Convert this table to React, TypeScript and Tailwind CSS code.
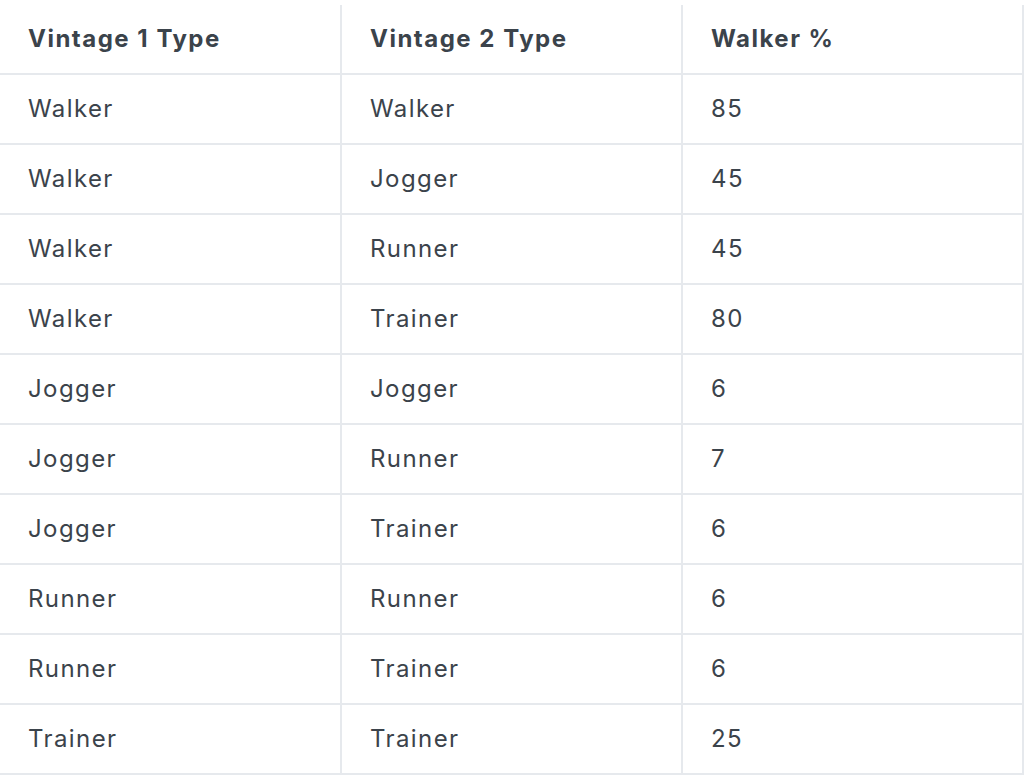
import React from "react";

const rows: [string, string, string][] = [
  ["Walker", "Walker", "85"],
  ["Walker", "Jogger", "45"],
  ["Walker", "Runner", "45"],
  ["Walker", "Trainer", "80"],
  ["Jogger", "Jogger", "6"],
  ["Jogger", "Runner", "7"],
  ["Jogger", "Trainer", "6"],
  ["Runner", "Runner", "6"],
  ["Runner", "Trainer", "6"],
  ["Trainer", "Trainer", "25"],
];

export default function App() {
  return (
    <div className="min-h-screen bg-white pt-[5px]" style={{ fontFamily: "Inter, 'Noto Sans', sans-serif" }}>
      <table className="w-[1024px] border-collapse table-fixed text-[24px] tracking-[1.4px] text-[#3b434b]">
        <thead>
          <tr className="h-[69px]">
            {["Vintage 1 Type", "Vintage 2 Type", "Walker %"].map((h, i) => (
              <th
                key={i}
                className="border-r-2 border-b-2 border-[#e6e9ed] pl-[28px] text-left font-bold tracking-[1.5px] align-middle"
              >
                {h}
              </th>
            ))}
          </tr>
        </thead>
        <tbody>
          {rows.map((r, ri) => (
            <tr key={ri} className="h-[70px]">
              {r.map((c, ci) => (
                <td
                  key={ci}
                  className="border-r-2 border-b-2 border-[#e6e9ed] pl-[28px] text-left font-normal align-middle"
                >
                  {c}
                </td>
              ))}
            </tr>
          ))}
        </tbody>
      </table>
    </div>
  );
}
